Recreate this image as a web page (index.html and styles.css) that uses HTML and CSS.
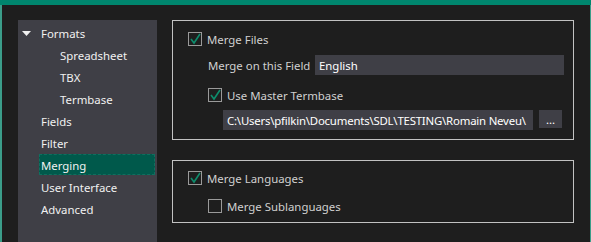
FILE: index.html
```html
<!DOCTYPE html>
<html>
<head>
<meta charset="utf-8">
<link rel="stylesheet" href="styles.css">
</head>
<body>
<div class="topbar"></div>
<div class="frame">
  <nav class="sidebar">
    <div class="item top"><svg class="caret" width="9" height="5" viewBox="0 0 9 5"><polygon points="0,0 9,0 4.5,5" fill="#f0f0f0"/></svg>Formats</div>
    <div class="item sub">Spreadsheet</div>
    <div class="item sub">TBX</div>
    <div class="item sub">Termbase</div>
    <div class="item top">Fields</div>
    <div class="item top">Filter</div>
    <div class="item top selected">Merging</div>
    <div class="item top">User Interface</div>
    <div class="item top">Advanced</div>
  </nav>
  <main class="content">
    <section class="group g1">
      <div class="row r1">
        <span class="cb checked"><svg width="12" height="12" viewBox="0 0 12 12"><polyline points="2,6 5,10 11,1" fill="none" stroke="#0e8c6c" stroke-width="1.6"/></svg></span>
        <span class="lbl">Merge Files</span>
      </div>
      <div class="row r2">
        <span class="lbl">Merge on this Field</span>
        <span class="field">English</span>
      </div>
      <div class="row r3">
        <span class="cb checked"><svg width="12" height="12" viewBox="0 0 12 12"><polyline points="2,6 5,10 11,1" fill="none" stroke="#0e8c6c" stroke-width="1.6"/></svg></span>
        <span class="lbl">Use Master Termbase</span>
      </div>
      <div class="row r4">
        <span class="path"><span class="pathtext">C:\Users\pfilkin\Documents\SDL\TESTING\Romain Neveu\</span></span>
        <span class="btn">...</span>
      </div>
    </section>
    <section class="group g2">
      <div class="row r1">
        <span class="cb checked"><svg width="12" height="12" viewBox="0 0 12 12"><polyline points="2,6 5,10 11,1" fill="none" stroke="#0e8c6c" stroke-width="1.6"/></svg></span>
        <span class="lbl">Merge Languages</span>
      </div>
      <div class="row r5">
        <span class="cb"></span>
        <span class="lbl">Merge Sublanguages</span>
      </div>
    </section>
  </main>
</div>
</body>
</html>
```
FILE: styles.css
```css
html, body {
  margin: 0;
  padding: 0;
  background: #1e1e1e;
  width: 591px;
  height: 242px;
  overflow: hidden;
  font-family: "Noto Sans", "Open Sans", sans-serif;
  font-size: 11.4px;
}
.topbar {
  height: 5px;
  background: #00866e;
}
.frame {
  display: flex;
  height: 237px;
  border-left: 2px solid #3b9d89;
  border-right: 1px solid #3b9d89;
  box-sizing: border-box;
  padding: 15px 0 0 16px;
}
.sidebar {
  width: 139px;
  background: #3f3f46;
  padding-top: 2px;
  box-sizing: border-box;
  flex: none;
}
.item {
  height: 22px;
  line-height: 23px;
  color: #f1f1f1;
  white-space: nowrap;
  position: relative;
}
.item.top { padding-left: 23px; }
.item.sub { padding-left: 42px; }
.caret {
  position: absolute;
  left: 4px;
  top: 9px;
}
.item.selected {
  margin-left: 21px;
  margin-right: 2px;
  padding-left: 2px;
  height: 21px;
  margin-bottom: 1px;
  background: #00594b;
  outline: 1px dashed #0f6f5f;
  outline-offset: -1px;
}
.content {
  margin-left: 15px;
  width: 402px;
  display: flex;
  flex-direction: column;
}
.group {
  border: 1px solid #c2c2c2;
  padding-left: 15px;
  padding-right: 9px;
  display: flex;
  flex-direction: column;
}
.g1 {
  height: 120px;
  box-sizing: border-box;
  padding-top: 11px;
}
.g2 {
  margin-top: 20px;
  height: 63px;
  box-sizing: border-box;
  padding-top: 10px;
}
.row {
  display: flex;
  align-items: center;
  color: #d0d0d0;
}
.r1 { height: 14px; }
.r2 { height: 20px; margin-top: 9px; margin-left: 20px; }
.r3 { height: 14px; margin-top: 13px; margin-left: 20px; }
.r4 { height: 20px; margin-top: 8px; margin-left: 35px; align-items: flex-start; }
.r5 { height: 14px; margin-top: 14px; margin-left: 20px; }
.cb {
  width: 14px;
  height: 14px;
  box-sizing: border-box;
  border: 1px solid #9a9a9a;
  display: flex;
  align-items: center;
  justify-content: center;
  flex: none;
}
.lbl {
  margin-left: 5px;
  line-height: 16px;
  padding-top: 1px;
  white-space: nowrap;
}
.r2 .lbl { margin-left: 0; width: 107px; }
.field {
  flex: 1;
  height: 20px;
  background: #3f3f46;
  color: #ffffff;
  line-height: 21px;
  padding-left: 4px;
}
.path {
  width: 310px;
  height: 20px;
  background: #3f3f46;
  padding-left: 4px;
  box-sizing: border-box;
  overflow: hidden;
  display: block;
}
.pathtext {
  color: #ffffff;
  line-height: 21px;
  white-space: nowrap;
  letter-spacing: -0.2px;
}
.btn {
  margin-left: 6px;
  width: 23px;
  height: 18px;
  background: #3f3f46;
  color: #ffffff;
  text-align: center;
  line-height: 20px;
  flex: none;
}
```
